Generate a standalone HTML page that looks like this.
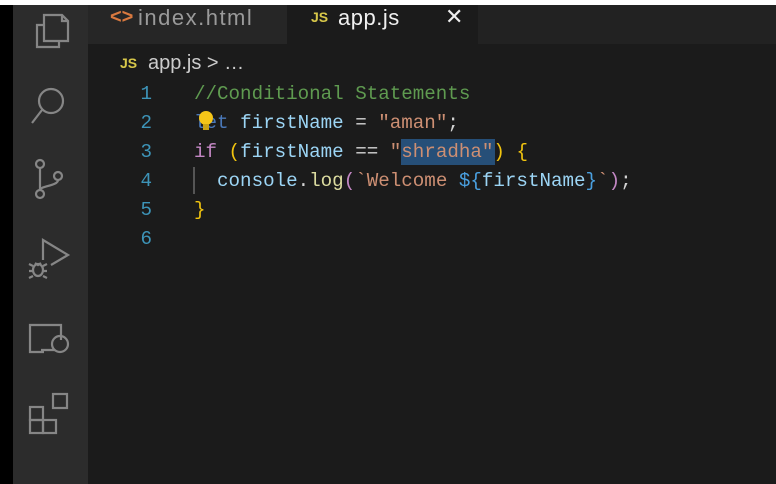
<!DOCTYPE html>
<html><head><meta charset="utf-8"><style>
*{margin:0;padding:0;box-sizing:border-box}
body{width:776px;height:484px;overflow:hidden;background:#1b1b1b;position:relative;font-family:"Liberation Sans",sans-serif}
.abs{position:absolute}
.code{font-family:"Liberation Mono","DejaVu Sans Mono",monospace;font-size:19.2px;white-space:pre;line-height:29px}
.ln{color:#3d94b8;width:40px;text-align:right;left:112px}
.cm{color:#5f9b50}.kw{color:#4a78b8}.v{color:#9cd5f5}.s{color:#cd8f73}.op{color:#d4d4d4}.p{color:#c387c4}.y{color:#f1c40f}.f{color:#dcdca0}.b{color:#4aa0e0}
</style></head><body>
<div class="abs" style="left:0;top:0;width:776px;height:5px;background:#fff"></div>
<div class="abs" style="left:0;top:5px;width:13px;height:479px;background:#000"></div>
<div class="abs" style="left:13px;top:5px;width:75px;height:479px;background:#2c2c2c"></div>
<div class="abs" style="left:88px;top:5px;width:688px;height:39px;background:#222"></div>
<div class="abs" style="left:88px;top:5px;width:199px;height:39px;background:#262626"></div>
<div class="abs" style="left:287px;top:5px;width:191px;height:39px;background:#1b1b1b"></div>
<div class="abs" style="left:110px;top:6px;font-size:20px;color:#d9793f;font-weight:bold">&lt;&gt;</div>
<div class="abs" style="left:138px;top:4px;font-size:22px;color:#9a9a9a;line-height:28px;letter-spacing:1.5px">index.html</div>
<div class="abs" style="left:311px;top:9px;font-size:14px;font-weight:bold;color:#d8c84a">JS</div>
<div class="abs" style="left:338px;top:4px;font-size:22px;color:#f0f0f0;line-height:28px;letter-spacing:0.5px">app.js</div>
<div class="abs" style="left:445px;top:4px;font-size:22px;color:#eee">✕</div>
<div class="abs" style="left:120px;top:55px;font-size:14px;font-weight:bold;color:#d8c84a">JS</div>
<div class="abs" style="left:148px;top:50px;font-size:20px;color:#ccc;line-height:26px">app.js &gt; …</div>
<svg class="abs" style="left:13px;top:5px" width="75" height="479" fill="none" stroke="#868686" stroke-width="2.2">
<path d="M31 10h18l6 6v20H31z M49 10v6h6 M31 20h-7v22h22v-6"/>
<circle cx="38" cy="96" r="12"/><path d="M29 105 L19 118"/>
<circle cx="27" cy="159" r="4"/><circle cx="27" cy="189" r="4"/><circle cx="45" cy="171" r="4"/><path d="M27 163v22 M45 175c0 6-18 6-18 10"/>
<path d="M30 255v-20l25 15-17 10"/><ellipse cx="25" cy="265" rx="5" ry="6"/><path d="M16 259l4 2M16 266h4M16 273l4-2M34 259l-4 2M34 266h-4M34 273l-4-2M22 258l3 2 3-2"/>
<path d="M48 335v-15H17v27h14M28 345h14"/><circle cx="47" cy="339" r="8"/>
<rect x="17" y="402" width="13" height="13"/><rect x="17" y="415" width="13" height="13"/><rect x="30" y="415" width="13" height="13"/><rect x="40" y="389" width="14" height="14"/>
</svg>
<div class="abs code ln" style="top:80px">1
2
3
4
5
6</div>
<div class="abs" style="left:401px;top:139px;width:94px;height:26px;background:#264f78"></div>
<div class="abs" style="left:193px;top:167px;width:2px;height:27px;background:#555"></div>
<div class="abs code" style="left:194px;top:80px"><span class="cm">//Conditional Statements</span>
<span class="kw">let</span> <span class="v">firstName</span> <span class="op">=</span> <span class="s">"aman"</span><span class="op">;</span>
<span class="p">if</span> <span class="y">(</span><span class="v">firstName</span> <span class="op">==</span> <span class="s">"shradha"</span><span class="y">)</span> <span class="y">{</span>
  <span class="v">console</span><span class="op">.</span><span class="f">log</span><span class="p">(</span><span class="s">`Welcome </span><span class="b">${</span><span class="v">firstName</span><span class="b">}</span><span class="s">`</span><span class="p">)</span><span class="op">;</span>
<span class="y">}</span></div>
<div class="abs" style="left:199px;top:111px;width:14px;height:14px;border-radius:50%;background:#f5c518"></div>
<div class="abs" style="left:203px;top:124px;width:6px;height:6px;background:#c9a215"></div>
</body></html>
